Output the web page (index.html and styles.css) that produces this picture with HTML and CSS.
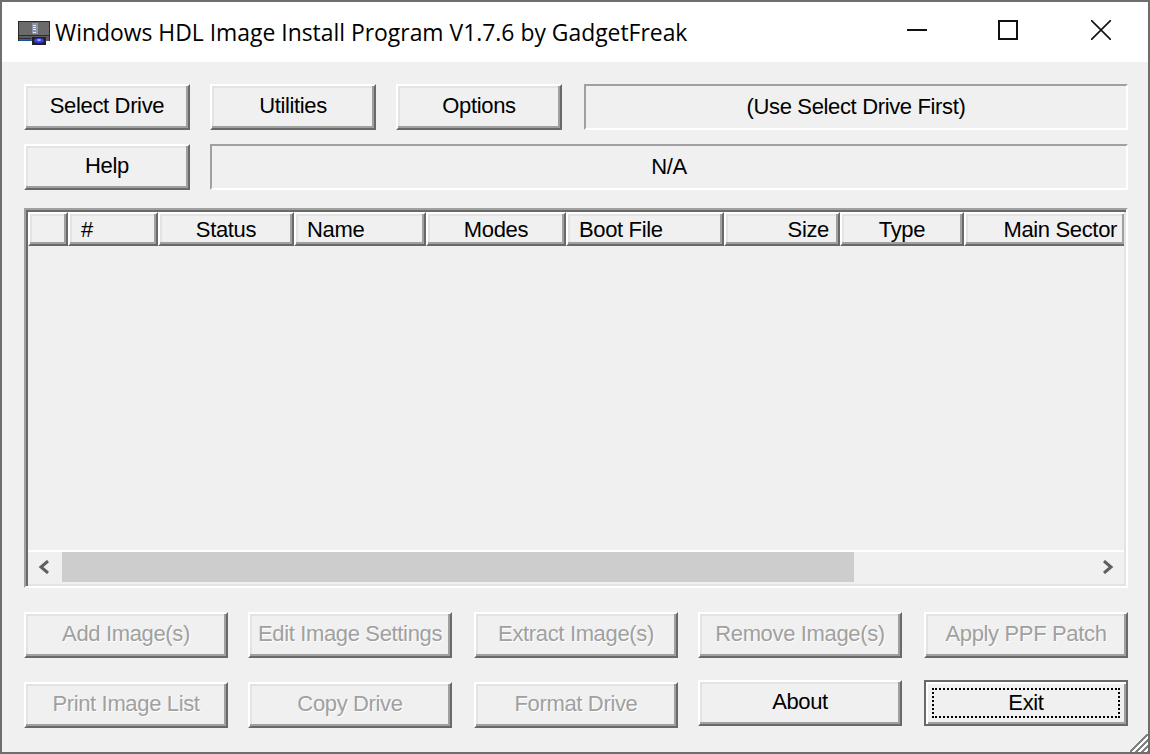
FILE: index.html
```html
<!DOCTYPE html>
<html lang="en">
<head>
<meta charset="utf-8">
<title>Windows HDL Image Install Program V1.7.6 by GadgetFreak</title>
<link rel="stylesheet" href="styles.css">
</head>
<body>
<div class="window">
  <header class="titlebar">
    <svg class="app-icon" width="32" height="25" viewBox="0 0 32 25" shape-rendering="crispEdges">
      <rect x="0" y="1" width="32" height="20" fill="#5d5d5d"/>
      <rect x="1" y="2" width="30" height="13" fill="#6b6b6b"/>
      <rect x="0" y="1" width="32" height="1" fill="#2a2a2a"/>
      <rect x="0" y="1" width="1" height="20" fill="#2a2a2a"/>
      <rect x="31" y="1" width="1" height="20" fill="#2a2a2a"/>
      <rect x="14" y="3" width="6" height="11" fill="#8c95a8"/>
      <path d="M15 5h3M15 7h3M15 9h3M15 12h3" stroke="#dfe6f5" fill="none"/>
      <rect x="1" y="15" width="30" height="1" fill="#2f2f2f"/>
      <rect x="1" y="18" width="12" height="1" fill="#2f2f2f"/>
      <rect x="1" y="20" width="12" height="1" fill="#1d4f9c"/>
      <rect x="14" y="17" width="14" height="8" fill="#222"/>
      <ellipse cx="21" cy="20.500" rx="5" ry="2.500" fill="#3b3bf0" shape-rendering="auto"/>
      <ellipse cx="21" cy="20" rx="2" ry="1" fill="#a9b4ff" shape-rendering="auto"/>
    </svg>
    <span class="title-text">Windows HDL Image Install Program V1.7.6 by GadgetFreak</span>
    <div class="caption-buttons">
      <svg class="caption caption-min" width="20" height="20" viewBox="0 0 20 20"><path d="M0 10h20" stroke="#111" stroke-width="2"/></svg>
      <svg class="caption" width="20" height="20" viewBox="0 0 20 20"><rect x="1" y="1" width="18" height="18" fill="none" stroke="#111" stroke-width="2"/></svg>
      <svg class="caption" width="20" height="20" viewBox="0 0 20 20"><path d="M0 0L20 20M20 0L0 20" stroke="#111" stroke-width="1.6"/></svg>
    </div>
  </header>
  <main class="content">
    <div class="top-row">
      <button class="btn btn-top">Select Drive</button>
      <button class="btn btn-top">Utilities</button>
      <button class="btn btn-top">Options</button>
      <div class="panel panel-drive">(Use Select Drive First)</div>
    </div>
    <div class="second-row">
      <button class="btn btn-top">Help</button>
      <div class="panel panel-wide">N/A</div>
    </div>
    <section class="table">
      <div class="thead">
        <div class="th"></div>
        <div class="th th-left">#</div>
        <div class="th th-center">Status</div>
        <div class="th th-left">Name</div>
        <div class="th th-center">Modes</div>
        <div class="th th-left">Boot File</div>
        <div class="th th-right">Size</div>
        <div class="th th-center">Type</div>
        <div class="th th-right th-clip">Main Sector</div>
      </div>
      <div class="tbody"></div>
      <div class="scrollbar">
        <svg class="arrow" width="14" height="14" viewBox="0 0 14 14"><path d="M10 1L3 7l7 6" fill="none" stroke="#5f5f5f" stroke-width="3"/></svg>
        <div class="track"><div class="thumb"></div></div>
        <svg class="arrow" width="14" height="14" viewBox="0 0 14 14"><path d="M4 1l7 6-7 6" fill="none" stroke="#5f5f5f" stroke-width="3"/></svg>
      </div>
    </section>
    <div class="action-row">
      <button class="btn btn-action" disabled>Add Image(s)</button>
      <button class="btn btn-action" disabled>Edit Image Settings</button>
      <button class="btn btn-action btn-wide-gap" disabled>Extract Image(s)</button>
      <button class="btn btn-action" disabled>Remove Image(s)</button>
      <button class="btn btn-action btn-wide-gap" disabled>Apply PPF Patch</button>
    </div>
    <div class="action-row action-row-last">
      <button class="btn btn-action btn-low" disabled>Print Image List</button>
      <button class="btn btn-action btn-low" disabled>Copy Drive</button>
      <button class="btn btn-action btn-low btn-wide-gap" disabled>Format Drive</button>
      <button class="btn btn-action">About</button>
      <button class="btn btn-action btn-default btn-wide-gap"><span class="focus">Exit</span></button>
    </div>
  </main>
  <svg class="grip" width="18" height="18" viewBox="0 0 18 18" shape-rendering="crispEdges">
    <path d="M20 -2L-2 20M20 4L4 20M20 10L10 20M20 16L16 20" stroke="#808080" stroke-width="2.500"/>
    <path d="M20 1L1 20M20 7L7 20M20 13L13 20" stroke="#fff" stroke-width="1.700"/>
  </svg>
</div>
</body>
</html>
```
FILE: styles.css
```css
* { box-sizing: border-box; }
html, body { margin: 0; padding: 0; }
body {
  width: 1150px;
  height: 754px;
  overflow: hidden;
  font-family: "Liberation Sans", Arial, sans-serif;
  letter-spacing: -0.35px;
  background: #f0f0f0;
}
.window {
  position: relative;
  width: 1150px;
  height: 754px;
  border: 2px solid #6e6e6e;
  display: flex;
  flex-direction: column;
  background: #f0f0f0;
}
.titlebar {
  height: 60px;
  background: #fff;
  display: flex;
  align-items: center;
  padding-left: 16px;
  flex: none;
}
.app-icon { flex: none; margin-right: 5px; margin-top: 1px; }
.title-text {
  font-family: "Open Sans", "Noto Sans", sans-serif;
  font-size: 22.900px;
  color: #000;
  letter-spacing: 0;
}
.caption-buttons {
  margin-left: auto;
  display: flex;
  gap: 73px;
  padding-right: 37px;
  padding-bottom: 4px;
}
.caption-min { margin-right: -2px; }
.content {
  flex: 1;
  padding: 22px 20px 0 22px;
  display: flex;
  flex-direction: column;
}
.btn {
  margin: 0;
  padding: 0 0 3px;
  font-family: inherit;
  letter-spacing: inherit;
  font-size: 22px;
  color: #000;
  background: #f0f0f0;
  border-style: solid;
  border-width: 2px;
  border-color: #fff #696969 #696969 #fff;
  box-shadow: inset -2px -2px 0 #a0a0a0, inset 2px 2px 0 #e3e3e3;
  height: 46px;
  border-radius: 0;
  outline: none;
}
.btn:disabled { color: #a0a0a0; text-shadow: 1px 1px 0 #fff; }
.btn-top { width: 166px; flex: none; }
.btn-action { width: 204px; flex: none; }
.btn-low { margin-top: 2px; }
.btn-wide-gap { margin-left: 2px; }
.btn-default {
  border: 2px solid #696969;
  box-shadow: inset 2px 2px 0 #fff, inset -2px -2px 0 #a0a0a0;
  padding: 6px;
  display: flex;
}
.focus {
  flex: 1;
  border: 2px dotted #000;
  display: flex;
  align-items: center;
  justify-content: center;
}
.top-row { display: flex; height: 46px; gap: 20px; }
.second-row { display: flex; height: 46px; gap: 20px; margin-top: 14px; }
.panel {
  flex: 1;
  height: 46px;
  border-style: solid;
  border-width: 2px;
  border-color: #a0a0a0 #fff #fff #a0a0a0;
  display: flex;
  align-items: center;
  justify-content: center;
  font-size: 22px;
  color: #000;
}
.panel-drive { margin-left: 2px; }
.table {
  margin-top: 18px;
  height: 380px;
  width: 1104px;
  flex: none;
  border: 2px solid;
  border-color: #a0a0a0 #fff #fff #a0a0a0;
  padding: 2px;
  box-shadow: inset 2px 2px 0 #696969, inset -2px -2px 0 #e3e3e3;
  display: flex;
  flex-direction: column;
}
.thead {
  height: 34px;
  display: grid;
  grid-template-columns: 40px 90px 136px 132px 140px 158px 116px 124px 1fr;
  flex: none;
  overflow: hidden;
}
.th {
  border: 2px solid;
  border-color: #fff #696969 #696969 #fff;
  box-shadow: inset -2px -2px 0 #a0a0a0, inset 2px 2px 0 #e3e3e3;
  font-size: 22px;
  color: #000;
  display: flex;
  align-items: center;
  padding-top: 2px;
  white-space: nowrap;
  overflow: hidden;
}
.th-left { padding-left: 11px; }
.th-center { justify-content: center; }
.th-right { justify-content: flex-end; padding-right: 9px; }
.th-clip { border-right: 0; padding-right: 7px; }
.tbody { flex: 1; }
.scrollbar {
  height: 34px;
  flex: none;
  border-top: 2px solid #fff;
  padding-bottom: 2px;
  display: flex;
  align-items: center;
}
.arrow { flex: none; margin: 0 10px; }
.track { flex: 1; height: 30px; }
.thumb { width: 792px; height: 30px; background: #cdcdcd; }
.action-row { display: flex; height: 46px; margin-top: 24px; gap: 20px; }
.action-row-last { margin-top: 22px; align-items: flex-start; }
.grip { position: absolute; right: 0; bottom: 0; }
```
